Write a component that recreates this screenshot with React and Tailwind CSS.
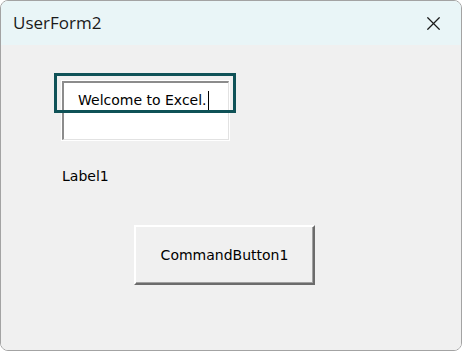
import { X } from "lucide-react";

const uiFont = { fontFamily: '"Segoe UI", "Open Sans", "Noto Sans", sans-serif' };
const ctlFont = { fontFamily: 'Tahoma, "DejaVu Sans", "Liberation Sans", sans-serif' };

export default function App() {
  return (
    <div className="w-[462px] h-[351px] bg-white">
      <div className="w-full h-full rounded-[8px] border border-[#a3a3a3] overflow-hidden flex flex-col">
        {/* title bar */}
        <div className="h-[44px] shrink-0 bg-[#e9f5f7] flex items-center justify-between pl-[12px] pr-[16px]">
          <span className="text-[17px] text-[#1a1a1a]" style={uiFont}>UserForm2</span>
          <X size={23} strokeWidth={1.3} className="text-[#1a1a1a]" />
        </div>

        {/* form body */}
        <div className="flex-1 bg-[#f0f0f0] pl-[60px] pt-[35px]">
          <div className="relative w-[169px] h-[61px] bg-white p-px">
            <div className="h-full border-t-2 border-l-2 border-r border-b border-t-[#8c8c8c] border-l-[#8c8c8c] border-r-[#e2e2e2] border-b-[#e2e2e2]">
              <div className="pl-[14px] pt-[7px] flex items-center text-[14px] leading-[20px] text-black" style={ctlFont}>
                Welcome to Excel.
                <span className="inline-block w-px h-[19px] bg-black ml-px" />
              </div>
            </div>
            <div className="absolute left-[-7px] top-[-7px] w-[182px] h-[40px] border-[3px] border-[#0f5257]" />
          </div>

          <div className="mt-[25px] ml-px text-[14px] text-black leading-[20px]" style={ctlFont}>Label1</div>

          <button
            className="mt-[39px] ml-[73px] w-[181px] h-[60px] bg-[#f0f0f0] border-2 border-t-white border-l-white border-r-[#6b6b6b] border-b-[#6b6b6b] shadow-[inset_-1px_-1px_0_#a0a0a0] text-[14px] text-black"
            style={ctlFont}
          >
            CommandButton1
          </button>
        </div>
      </div>
    </div>
  );
}
